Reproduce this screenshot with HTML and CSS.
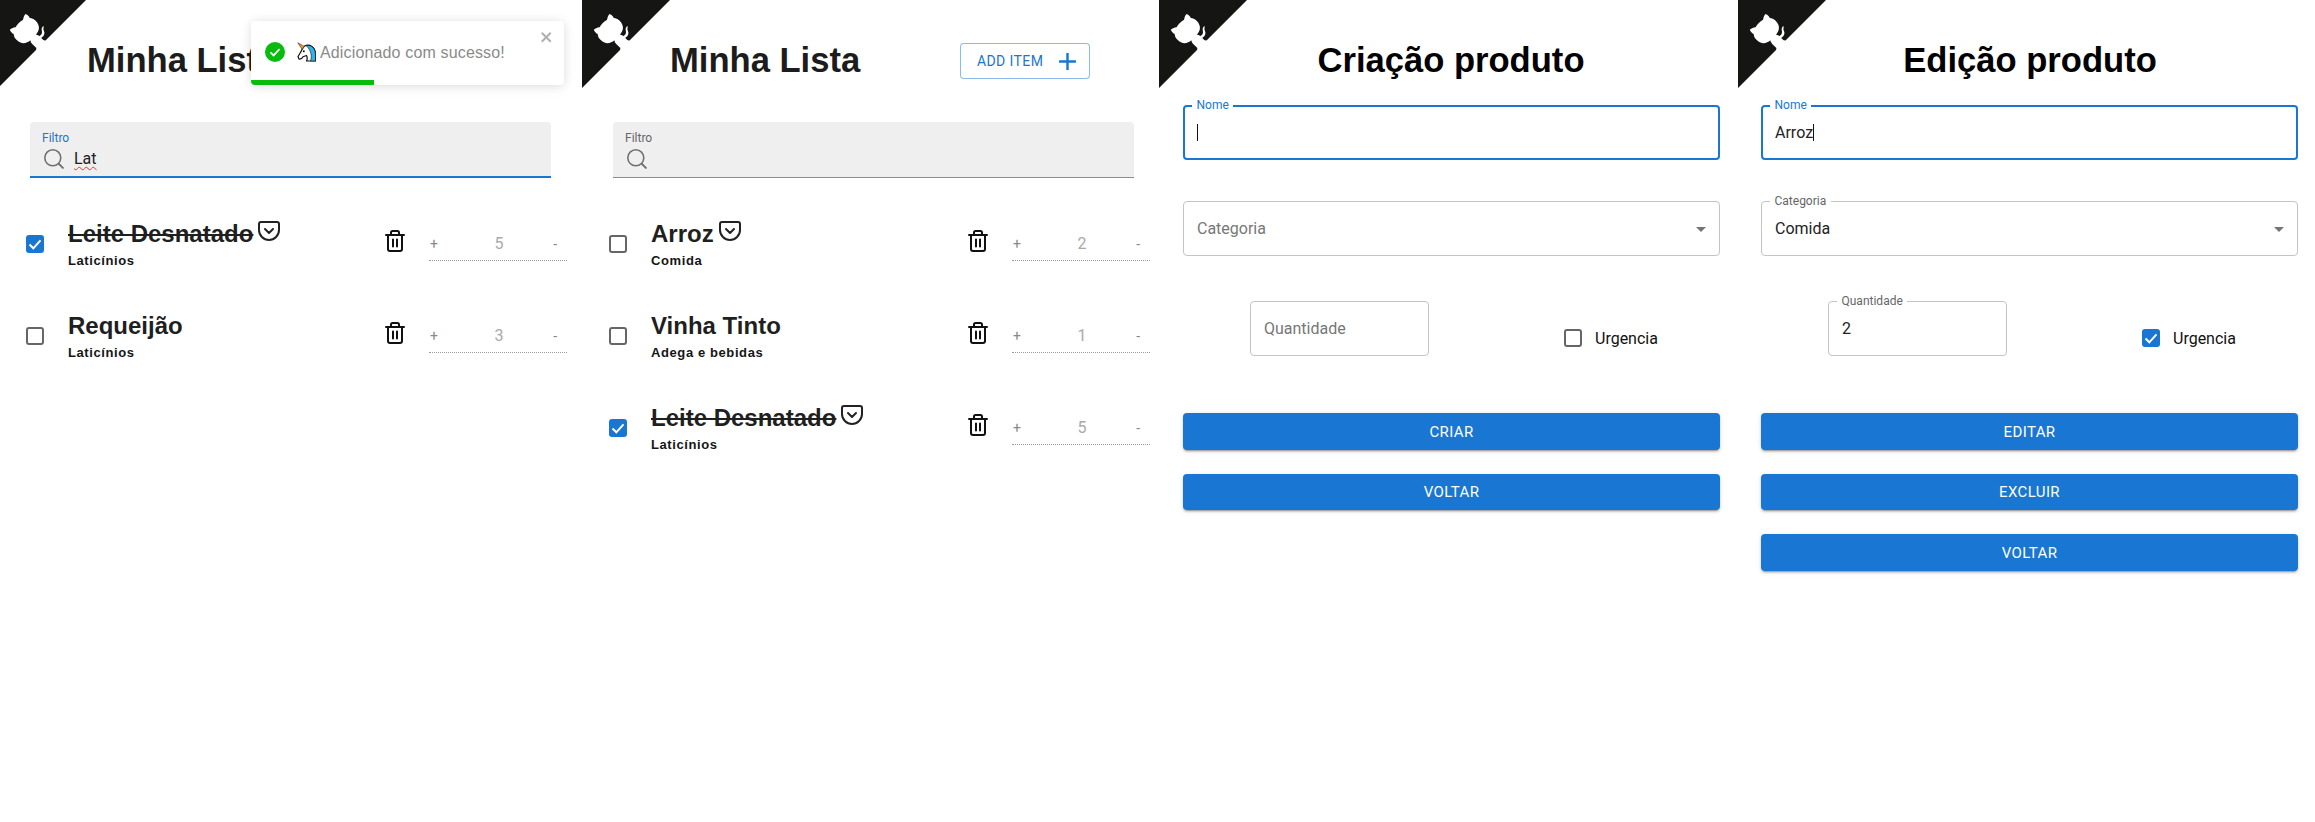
FILE: index.html
```html
<!DOCTYPE html>
<html lang="pt-BR">
<head>
<meta charset="utf-8">
<title>Minha Lista</title>
<link rel="stylesheet" href="styles.css">
</head>
<body>
<svg class="defs" width="0" height="0" aria-hidden="true">
  <defs>
    <symbol id="octo" viewBox="0 0 250 250">
      <g transform="translate(250,0) scale(-1,1)">
        <path fill="#151513" d="M0,0 L115,115 L130,115 L142,142 L250,250 L250,0 Z"/>
        <path fill="#fff" d="M128.3,109.0 C113.8,99.7 119.0,89.6 119.0,89.6 C122.0,82.7 120.5,78.6 120.5,78.6 C119.2,72.0 123.4,76.3 123.4,76.3 C127.3,80.9 125.5,87.3 125.5,87.3 C122.9,97.6 130.6,101.9 134.4,103.2"/>
        <path fill="#fff" d="M115.0,115.0 C114.9,115.1 118.7,116.5 119.8,115.4 L133.7,101.6 C136.9,99.2 139.9,98.4 142.2,98.6 C133.8,88.0 127.5,74.4 143.8,58.0 C148.5,53.4 154.0,51.2 159.7,51.0 C160.3,49.4 163.2,43.6 171.4,40.1 C171.4,40.1 176.1,42.5 178.8,56.2 C183.1,58.6 187.2,61.8 190.9,65.4 C194.5,69.0 197.7,73.2 200.1,77.6 C213.8,80.2 216.3,84.9 216.3,84.9 C212.7,93.1 206.9,96.0 205.4,96.6 C205.1,102.4 203.0,107.8 198.3,112.5 C181.9,128.9 168.3,122.5 157.7,114.1 C157.9,116.9 156.7,120.9 152.7,124.9 L141.0,136.5 C139.8,137.7 141.6,141.9 141.8,141.8 Z"/>
      </g>
    </symbol>
    <symbol id="pocket" viewBox="0 0 24 24">
      <path fill="none" stroke="#222" stroke-width="2" stroke-linecap="round" stroke-linejoin="round" d="M4 3h16a2 2 0 0 1 2 2v6a10 10 0 0 1-20 0V5a2 2 0 0 1 2-2z"/>
      <path fill="none" stroke="#222" stroke-width="2" stroke-linecap="round" stroke-linejoin="round" d="M8 10l4 4 4-4"/>
    </symbol>
    <symbol id="trash" viewBox="0 0 20 22">
      <path fill="none" stroke="#111" stroke-width="2" stroke-linecap="round" stroke-linejoin="round" d="M1 5h18M6 5V2.6A1.6 1.6 0 0 1 7.6 1h4.8A1.6 1.6 0 0 1 14 2.6V5M3 5v14a2 2 0 0 0 2 2h10a2 2 0 0 0 2-2V5M8 9.500v7M12 9.500v7"/>
    </symbol>
    <symbol id="search" viewBox="0 0 20 20">
      <circle cx="8.800" cy="8.800" r="8" fill="none" stroke="#707070" stroke-width="1.600"/>
      <path d="M14.500 14.500l5 5" fill="none" stroke="#707070" stroke-width="1.800"/>
    </symbol>
    <symbol id="tick" viewBox="0 0 18 18">
      <path d="M3.500 9.500l3.800 3.800 7.200-8" fill="none" stroke="#fff" stroke-width="2"/>
    </symbol>
  </defs>
</svg>

<main class="screens">

  <section class="panel panel-first">
    <svg class="corner corner-first"><use href="#octo"/></svg>
    <header class="list-header"><h1 class="list-title">Minha Lista</h1></header>
    <div class="filter filter-focus">
      <span class="filter-label filter-label-focus">Filtro</span>
      <div class="filter-row">
        <svg class="search-icon"><use href="#search"/></svg>
        <span class="filter-value">Lat</span>
      </div>
    </div>
    <div class="list">
      <article class="row">
        <span class="check check-on"><svg class="tick"><use href="#tick"/></svg></span>
        <div class="info">
          <div class="name-line"><span class="name name-done">Leite Desnatado</span><svg class="pocket"><use href="#pocket"/></svg></div>
          <div class="category">Laticínios</div>
        </div>
        <svg class="trash"><use href="#trash"/></svg>
        <div class="qty"><span class="qty-sign">+</span><span class="qty-value">5</span><span class="qty-sign qty-minus">-</span></div>
      </article>
      <article class="row">
        <span class="check"></span>
        <div class="info">
          <div class="name-line"><span class="name">Requeijão</span></div>
          <div class="category">Laticínios</div>
        </div>
        <svg class="trash"><use href="#trash"/></svg>
        <div class="qty"><span class="qty-sign">+</span><span class="qty-value">3</span><span class="qty-sign qty-minus">-</span></div>
      </article>
    </div>
    <aside class="toast">
      <div class="toast-body">
        <svg class="toast-check" viewBox="0 0 20 20"><circle cx="10" cy="10" r="10" fill="#07bc0c"/><path d="M5.500 10.300l3.100 3.100 6-6.400" fill="none" stroke="#fff" stroke-width="1.800"/></svg>
        <svg class="unicorn" viewBox="0 0 19 20" role="img" aria-label="unicórnio">
          <path d="M7.500 4C12.500 1.500 18.500 5 18.500 12.500V19H9.500C10.500 17 10.300 15 9.500 13.500L6 14.800C5 16.800 3.500 17.300 2 17L1 14.500C2.500 12 4 10 5 7.500Z" fill="#fff" stroke="#111" stroke-width="1.200" stroke-linejoin="round"/>
          <path d="M9 3.600C13.800 2.500 18.500 6 18.500 12.500V19H13.500C15.300 14 14 8 9 3.600Z" fill="#2fb4e6" stroke="#111" stroke-width=".6"/>
          <path d="M.8.800L7.200 4.400 5 7.200Z" fill="#e8a33d" stroke="#5a3b10" stroke-width=".7" stroke-linejoin="round"/>
          <circle cx="6.800" cy="9.300" r="1" fill="#111"/>
        </svg>
        <span class="toast-text">Adicionado com sucesso!</span>
      </div>
      <svg class="toast-close" viewBox="0 0 14 16"><path fill-rule="evenodd" d="M7.710 8.230l3.750 3.750-1.480 1.480-3.750-3.750-3.750 3.750L1 11.980l3.750-3.750L1 4.480 2.480 3l3.750 3.750L9.980 3l1.480 1.480-3.750 3.750z"/></svg>
      <div class="toast-bar"></div>
    </aside>
  </section>

  <section class="panel panel-list">
    <svg class="corner"><use href="#octo"/></svg>
    <header class="list-header">
      <h1 class="list-title">Minha Lista</h1>
      <button class="add-btn" type="button">ADD ITEM<svg class="add-icon" viewBox="0 0 24 24"><path d="M19 13h-6v6h-2v-6H5v-2h6V5h2v6h6v2z"/></svg></button>
    </header>
    <div class="filter">
      <span class="filter-label">Filtro</span>
      <div class="filter-row"><svg class="search-icon"><use href="#search"/></svg></div>
    </div>
    <div class="list">
      <article class="row">
        <span class="check"></span>
        <div class="info">
          <div class="name-line"><span class="name">Arroz</span><svg class="pocket"><use href="#pocket"/></svg></div>
          <div class="category">Comida</div>
        </div>
        <svg class="trash"><use href="#trash"/></svg>
        <div class="qty"><span class="qty-sign">+</span><span class="qty-value">2</span><span class="qty-sign qty-minus">-</span></div>
      </article>
      <article class="row">
        <span class="check"></span>
        <div class="info">
          <div class="name-line"><span class="name">Vinha Tinto</span></div>
          <div class="category">Adega e bebidas</div>
        </div>
        <svg class="trash"><use href="#trash"/></svg>
        <div class="qty"><span class="qty-sign">+</span><span class="qty-value">1</span><span class="qty-sign qty-minus">-</span></div>
      </article>
      <article class="row">
        <span class="check check-on"><svg class="tick"><use href="#tick"/></svg></span>
        <div class="info">
          <div class="name-line"><span class="name name-done">Leite Desnatado</span><svg class="pocket"><use href="#pocket"/></svg></div>
          <div class="category">Laticínios</div>
        </div>
        <svg class="trash"><use href="#trash"/></svg>
        <div class="qty"><span class="qty-sign">+</span><span class="qty-value">5</span><span class="qty-sign qty-minus">-</span></div>
      </article>
    </div>
  </section>

  <section class="panel panel-form">
    <svg class="corner"><use href="#octo"/></svg>
    <h1 class="form-title">Criação produto</h1>
    <form class="form">
      <div class="field field-focus">
        <span class="field-label field-label-focus">Nome</span>
        <span class="caret"></span>
      </div>
      <div class="field field-select">
        <span class="placeholder">Categoria</span>
        <span class="arrow"></span>
      </div>
      <div class="qty-row">
        <div class="field field-qty"><span class="placeholder">Quantidade</span></div>
        <label class="urgent"><span class="check"></span>Urgencia</label>
      </div>
      <div class="actions">
        <button class="btn" type="button">CRIAR</button>
        <button class="btn" type="button">VOLTAR</button>
      </div>
    </form>
  </section>

  <section class="panel panel-form panel-edit">
    <svg class="corner"><use href="#octo"/></svg>
    <h1 class="form-title">Edição produto</h1>
    <form class="form">
      <div class="field field-focus">
        <span class="field-label field-label-focus">Nome</span>
        <span class="value">Arroz</span><span class="caret"></span>
      </div>
      <div class="field field-select">
        <span class="field-label">Categoria</span>
        <span class="value">Comida</span>
        <span class="arrow"></span>
      </div>
      <div class="qty-row">
        <div class="field field-qty"><span class="field-label">Quantidade</span><span class="value">2</span></div>
        <label class="urgent"><span class="check check-on"><svg class="tick"><use href="#tick"/></svg></span>Urgencia</label>
      </div>
      <div class="actions">
        <button class="btn" type="button">EDITAR</button>
        <button class="btn" type="button">EXCLUIR</button>
        <button class="btn" type="button">VOLTAR</button>
      </div>
    </form>
  </section>

</main>
</body>
</html>
```
FILE: styles.css
```css
* { box-sizing: border-box; }
html, body { margin: 0; padding: 0; background: #fff; }
body { width: 2315px; height: 822px; overflow: hidden; font-family: Roboto, "Liberation Sans", sans-serif; }
.defs { position: absolute; }

.screens { display: flex; align-items: flex-start; }
.panel { position: relative; flex: none; width: 577px; min-height: 600px; }
.panel-first { width: 583px; margin-left: -1px; }
.panel-form { width: 579px; }
.panel-edit { width: 577px; }

.corner { position: absolute; left: 0; top: 0; width: 88px; height: 88px; }
.corner-first { left: -1px; }

/* List screens */
.list-header { display: flex; align-items: center; height: 36px; margin: 43px 0; padding: 0 69px 0 88px; justify-content: space-between; }
.list-title { margin: 0 0 2px; font: 700 34.600px/40px "Liberation Sans", Arial, sans-serif; color: #1c1c1c; white-space: nowrap; }

.add-btn { display: flex; align-items: center; justify-content: space-between; width: 130px; height: 36px; padding: 0 7px 0 16px; background: #fff; border: 1px solid rgba(25,118,210,.5); border-radius: 4px; color: #1976d2; font: 400 14px/1 Roboto, sans-serif; letter-spacing: .4px; }
.add-icon { width: 29px; height: 29px; fill: #1976d2; }

.filter { width: 521px; height: 56px; margin-left: 31px; padding: 9px 12px 0; background: #efefef; border-bottom: 1px solid #8c8c8c; border-radius: 4px 4px 0 0; }
.filter-focus { border-bottom: 2px solid #1976d2; }
.filter-label { display: block; font-size: 12px; line-height: 14px; color: #666; }
.filter-label-focus { color: #1976d2; }
.filter-row { display: flex; align-items: center; gap: 10px; margin-top: 4px; height: 20px; padding-left: 2px; }
.search-icon { width: 20px; height: 20px; flex: none; }
.filter-value { font-size: 16px; line-height: 20px; color: #222; text-decoration: underline wavy #e33; text-decoration-thickness: 1px; text-underline-offset: 2px; }

.list { display: flex; flex-direction: column; gap: 32px; width: 568px; margin-top: 36px; padding-left: 27px; }
.row { display: flex; align-items: center; height: 60px; }
.check { display: inline-flex; flex: none; width: 18px; height: 18px; border: 2px solid #666; border-radius: 3px; background: #fff; }
.check-on { border: 0; background: #1976d2; }
.tick { width: 18px; height: 18px; }
.info { flex: 1; margin-left: 24px; }
.name-line { display: flex; align-items: flex-start; }
.name { font: 700 24px/28px "Liberation Sans", Arial, sans-serif; color: #1f1f1f; }
.name-done { text-decoration: line-through; text-decoration-thickness: 2px; }
.pocket { width: 24px; height: 24px; margin: -1px 0 0 4px; flex: none; }
.category { margin-top: 5px; font: 700 13px/16px "Liberation Sans", Arial, sans-serif; letter-spacing: .6px; color: #151515; }
.trash { width: 20px; height: 22px; flex: none; margin: 0 24px 6px 0; }
.qty { display: grid; grid-template-columns: 1fr auto 1fr; align-items: start; width: 138px; height: 29px; margin-top: 5px; padding: 2px 1px 0; border-bottom: 1px dotted #999; }
.qty-value { margin-left: 2px; font-size: 16px; line-height: 20px; color: #aaa; }
.qty-sign { font-size: 14px; line-height: 20px; color: #888; }
.qty-minus { justify-self: end; margin-right: 9px; }

/* Toast */
.toast { position: absolute; left: 252px; top: 21px; width: 313px; height: 64px; background: #fff; border-radius: 4px; overflow: hidden; box-shadow: 0 1px 10px rgba(0,0,0,.1), 0 2px 15px rgba(0,0,0,.05); }
.toast-body { display: flex; align-items: center; height: 62px; padding-left: 14px; }
.toast-check { width: 20px; height: 20px; flex: none; }
.unicorn { width: 19px; height: 20px; margin-left: 12px; flex: none; }
.toast-text { margin: 1px 0 0 4px; font: 400 16px/20px "Liberation Sans", Arial, sans-serif; letter-spacing: .15px; color: #8a8a8a; white-space: nowrap; }
.toast-close { position: absolute; top: 8px; right: 10px; width: 14px; height: 16px; fill: #b0b0b0; }
.toast-bar { position: absolute; left: 0; bottom: 0; width: 123px; height: 5px; background: #07bc0c; }

/* Form screens */
.form-title { margin: 0; padding: 40px 0 0 24px; width: 560px; font: 700 34.600px/40px "Liberation Sans", Arial, sans-serif; color: #000; text-align: center; white-space: nowrap; }
.form { display: flex; flex-direction: column; width: 537px; margin: 25px 0 0 24px; }
.panel-edit .form { margin-left: 23px; }
.field { position: relative; display: flex; align-items: center; height: 55px; padding: 0 13px; border: 1px solid #c4c4c4; border-radius: 4px; font-size: 16px; color: #222; }
.field-focus { border: 2px solid #1976d2; padding: 0 12px; }
.field-select { margin-top: 41px; }
.field-label { position: absolute; left: 8px; top: -8px; padding: 0 4.500px; background: #fff; font-size: 12px; line-height: 14px; color: #666; }
.field-focus .field-label { left: 7px; top: -9px; }
.field-label-focus { color: #1976d2; }
.placeholder { color: #777; }
.caret { width: 1px; height: 17px; background: #111; }
.arrow { position: absolute; right: 13px; top: 25px; border-style: solid; border-width: 5px 5px 0; border-color: #757575 transparent transparent; }
.qty-row { display: flex; margin-top: 45px; }
.field-qty { width: 179px; margin-left: 67px; }
.urgent { display: flex; align-items: center; gap: 13px; height: 18px; margin: 28px 0 0 135px; font-size: 16px; color: #111; }
.actions { display: flex; flex-direction: column; gap: 24px; margin-top: 57px; }
.btn { width: 100%; height: 36.500px; padding: 2px 0 0; border: 0; border-radius: 4px; background: #1976d2; color: #fff; font: 400 15px/1 Roboto, sans-serif; letter-spacing: .4px; box-shadow: 0 3px 1px -2px rgba(0,0,0,.2), 0 2px 2px 0 rgba(0,0,0,.14), 0 1px 5px 0 rgba(0,0,0,.12); }
```
